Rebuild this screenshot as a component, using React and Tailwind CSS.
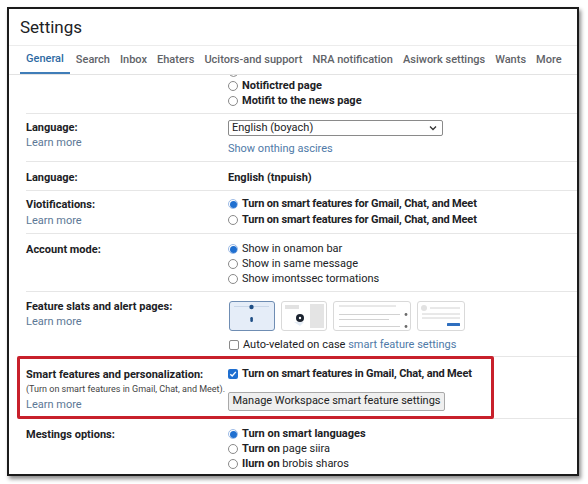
import React from "react";

const font = { fontFamily: "Roboto, 'Liberation Sans', Arial, sans-serif" };

function Radio({ checked }) {
  if (checked) {
    return (
      <span className="w-[10px] h-[10px] shrink-0 rounded-full border border-[#9dbbe6] flex items-center justify-center">
        <span className="w-[7px] h-[7px] rounded-full bg-[#1f6fd0]" />
      </span>
    );
  }
  return <span className="w-[10px] h-[10px] shrink-0 rounded-full border border-[#8a8a8a] bg-white" />;
}

function Check({ checked }) {
  if (checked) {
    return (
      <span className="w-[10px] h-[10px] shrink-0 rounded-[2px] bg-[#1f6fd0] flex items-center justify-center">
        <svg width="8" height="8" viewBox="0 0 8 8">
          <path d="M1.3 4.2 L3.2 6 L6.8 1.9" stroke="white" strokeWidth="1.4" fill="none" />
        </svg>
      </span>
    );
  }
  return <span className="w-[10px] h-[10px] shrink-0 rounded-[2px] border border-[#8a8a8a] bg-white" />;
}

function Option({ checked, children, h = "h-[15px]" }) {
  return (
    <div className={`flex items-center gap-[4px] whitespace-nowrap ${h}`}>
      <Radio checked={checked} />
      <span>{children}</span>
    </div>
  );
}

function LearnMore() {
  return <div className="h-[15px] leading-[15px] text-[#5c7896]">Learn more</div>;
}

function Row({ label, children, className = "", labelPt = "pt-[5.5px]", extra }) {
  return (
    <div className={`relative ml-[17px] flex border-b border-[#e6e6e6] ${className}`}>
      <div className={`w-[202px] shrink-0 ${labelPt}`}>
        <div className="h-[15px] leading-[15px] font-bold text-[#202124]">{label}</div>
        {extra}
      </div>
      <div className="flex-1">{children}</div>
    </div>
  );
}

function Thumbs() {
  return (
    <div className="flex gap-[6px] h-[30px]">
      <div className="w-[46px] h-[30px] rounded-[3px] border-[1.5px] border-[#6f8db3] bg-[#e5edf8]">
        <svg width="43" height="27" viewBox="0 0 43 27">
          <line x1="4" y1="4.5" x2="39" y2="4.5" stroke="#c9d6e8" strokeWidth="1" />
          <circle cx="21.5" cy="5" r="2.2" fill="#1f4f86" />
          <rect x="20.3" y="15" width="2.6" height="5" rx="1.2" fill="#1f4f86" />
        </svg>
      </div>
      <div className="w-[46px] h-[30px] rounded-[3px] border border-[#d9d9d9] bg-white">
        <svg width="44" height="28" viewBox="0 0 44 28">
          <rect x="3" y="3" width="14" height="4" fill="#e2e2e2" />
          <rect x="28" y="2" width="14" height="24" fill="#e4e4e4" />
          <path d="M12 20 L18 24 L22 20 Z" fill="#e4ecf5" />
          <circle cx="18" cy="16" r="4" fill="#1c2430" />
          <circle cx="18" cy="16" r="1.2" fill="#ffffff" />
        </svg>
      </div>
      <div className="w-[78px] h-[30px] rounded-[3px] border border-[#d9d9d9] bg-white">
        <svg width="76" height="28" viewBox="0 0 76 28">
          <line x1="5" y1="4" x2="62" y2="4" stroke="#d2d2d2" strokeWidth="1" />
          <line x1="5" y1="12.5" x2="66" y2="12.5" stroke="#d2d2d2" strokeWidth="1" />
          <circle cx="72" cy="12.5" r="1.4" fill="#6a6a6a" />
          <line x1="5" y1="17.5" x2="55" y2="17.5" stroke="#d2d2d2" strokeWidth="1" />
          <line x1="5" y1="24.5" x2="66" y2="24.5" stroke="#d2d2d2" strokeWidth="1" />
          <circle cx="72" cy="24.5" r="1.4" fill="#6a6a6a" />
        </svg>
      </div>
      <div className="w-[48px] h-[30px] rounded-[3px] border border-[#d9d9d9] bg-white">
        <svg width="46" height="28" viewBox="0 0 46 28">
          <circle cx="6" cy="6" r="3" fill="#e2e2e2" />
          <line x1="12" y1="6" x2="42" y2="6" stroke="#d2d2d2" strokeWidth="1" />
          <line x1="4" y1="12" x2="42" y2="12" stroke="#d2d2d2" strokeWidth="1" />
          <line x1="4" y1="16" x2="42" y2="16" stroke="#d2d2d2" strokeWidth="1" />
          <rect x="29" y="21" width="13" height="3" rx="0.5" fill="#2f6fbf" />
        </svg>
      </div>
    </div>
  );
}

const tabs = [
  "General",
  "Search",
  "Inbox",
  "Ehaters",
  "Ucitors-and support",
  "NRA notification",
  "Asiwork settings",
  "Wants",
  "More",
];

export default function App() {
  return (
    <div className="min-h-[484px] bg-white pt-[7px] pl-[7px] text-[11px] text-[#202124]" style={font}>
      <div className="w-[572px] h-[469px] border-2 border-[#1b1b1b] bg-white overflow-hidden shadow-[2px_3px_4px_rgba(0,0,0,0.45)]">
        {/* header */}
        <div className="h-[37px] border-b border-[#ececec] pl-[11px] flex items-center">
          <span className="text-[17px] leading-none text-[#202124]">Settings</span>
        </div>

        {/* tabs */}
        <div className="h-[29px] border-b border-[#e3e3e3] flex items-stretch pl-[11px] gap-[10px] text-[11px] whitespace-nowrap">
          {tabs.map((t, i) => (
            <div
              key={t}
              className={`flex items-center h-full shrink-0 ${
                i === 0
                  ? "text-[#2e6aa3] font-medium border-b-[2px] border-[#3f7db8] px-[6px] mr-[-4px]"
                  : "text-[#5f6368] font-medium"
              }`}
            >
              {t}
            </div>
          ))}
        </div>

        {/* content */}
        <div className="overflow-hidden">
          <Row label="" labelPt="pt-0" className="h-[39px]">
            <div className="leading-[15px] font-bold">
              {/* edge of the option scrolled out of view */}
              <div className="h-[3px] overflow-hidden relative">
                <span className="absolute left-[1px] top-[-7px] w-[9px] h-[9px] rounded-full border border-[#8a8a8a]" />
              </div>
              <Option>Notifictred page</Option>
              <Option>Motifit to the news page</Option>
            </div>
          </Row>

          <Row label="Language:" className="h-[48px]" extra={<LearnMore />} labelPt="pt-[5.5px]">
            <div className="pt-[6px]">
              <div className="w-[215px] h-[16px] border border-[#8a8a8a] rounded-[2px] flex items-center justify-between pl-[3px] pr-[5px]">
                <span>English (boyach)</span>
                <svg width="8" height="6" viewBox="0 0 8 6">
                  <path d="M1 1.5 L4 4.5 L7 1.5" stroke="#333" strokeWidth="1.3" fill="none" />
                </svg>
              </div>
              <div className="mt-[5px] h-[15px] leading-[15px] text-[#4f7aa8]">Show onthing ascires</div>
            </div>
          </Row>

          <Row label="Language:" className="h-[29px]" labelPt="pt-[7.5px]">
            <div className="pt-[7.5px] h-[15px] leading-[15px] font-bold box-content">English (tnpuish)</div>
          </Row>

          <Row
            label="Viotifications:"
            className="h-[43px]"
            labelPt="pt-[5.5px]"
            extra={<div className="mt-[1px]"><LearnMore /></div>}
          >
            <div className="pt-[5px] font-bold tracking-[-0.15px]">
              <Option h="h-[16px]" checked>Turn on smart features for Gmail, Chat, and Meet</Option>
              <Option h="h-[16px]">Turn on smart features for Gmail, Chat, and Meet</Option>
            </div>
          </Row>

          <Row label="Account mode:" className="h-[58px]" labelPt="pt-[7.5px]">
            <div className="pt-[7.5px]">
              <Option checked>Show in onamon bar</Option>
              <Option>Show in same message</Option>
              <Option>Show imontssec tormations</Option>
            </div>
          </Row>

          <Row label="Feature slats and alert pages:" className="h-[65px]" labelPt="pt-[6.5px]" extra={<LearnMore />}>
            <div className="pt-[9px] pl-[1px]">
              <Thumbs />
              <div className="mt-[6.5px] flex items-center gap-[4px] h-[15px]">
                <Check />
                <span>
                  Auto-velated on case <span className="text-[#4f7aa8]">smart feature settings</span>
                </span>
              </div>
            </div>
          </Row>

          <Row
            label="Smart features and personalization:"
            className="h-[62px]"
            labelPt="pt-[9.5px]"
            extra={
              <>
                <div className="h-[15px] leading-[15px] text-[9px] text-[#444]">
                  (Turn on smart features in Gmail, Chat, and Meet).
                </div>
                <LearnMore />
              </>
            }
          >
            <div className="pt-[9.5px]">
              <div className="flex items-center gap-[4px] h-[15px] font-bold tracking-[-0.15px]">
                <Check checked />
                <span>Turn on smart features in Gmail, Chat, and Meet</span>
              </div>
              <div className="mt-[10.5px] w-[217px] h-[19px] border border-[#a9a9a9] rounded-[2px] bg-[#efefef] flex items-center justify-center text-[#222]">
                Manage Workspace smart feature settings
              </div>
            </div>
            <div className="absolute left-[-9px] top-[-1px] w-[477px] h-[63px] border-[3px] border-[#c8202b] rounded-[2px] pointer-events-none" />
          </Row>

          <div className="ml-[17px] flex h-[60px]">
            <div className="w-[202px] shrink-0 pt-[7.5px]">
              <div className="h-[15px] leading-[15px] font-bold">Mestings options:</div>
            </div>
            <div className="pt-[7.5px]">
              <Option checked><b>Turn on smart languages</b></Option>
              <Option><b>Turn on</b> page siira</Option>
              <Option><b>Ilurn on</b> brobis sharos</Option>
            </div>
          </div>
        </div>
      </div>
    </div>
  );
}
